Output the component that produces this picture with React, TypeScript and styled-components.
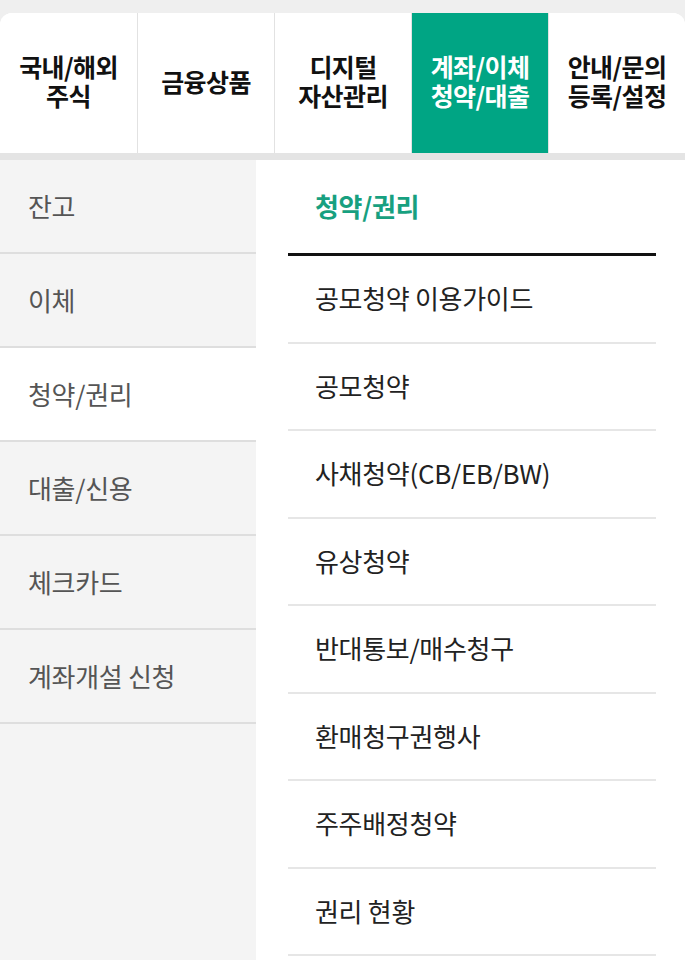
import React from 'react'
import styled, { createGlobalStyle } from 'styled-components'

const GlobalStyle = createGlobalStyle`
  html, body {
    margin: 0;
    padding: 0;
    background: #efefef;
    font-family: "Noto Sans CJK KR", "Noto Sans", sans-serif;
  }
  * { box-sizing: border-box; }
`

const tabs = [
  ['국내/해외', '주식'],
  ['금융상품'],
  ['디지털', '자산관리'],
  ['계좌/이체', '청약/대출'],
  ['안내/문의', '등록/설정'],
]

const sideItems = ['잔고', '이체', '청약/권리', '대출/신용', '체크카드', '계좌개설 신청']

const subItems = [
  '공모청약 이용가이드',
  '공모청약',
  '사채청약(CB/EB/BW)',
  '유상청약',
  '반대통보/매수청구',
  '환매청구권행사',
  '주주배정청약',
  '권리 현황',
]

export default function App() {
  return (
    <Page>
      <GlobalStyle />
      <TabBar>
        {tabs.map((lines, i) => (
          <Tab key={i} active={i === 3}>
            {lines.map((l) => (
              <span key={l}>{l}</span>
            ))}
          </Tab>
        ))}
      </TabBar>
      <Body>
        <Side>
          {sideItems.map((s) => (
            <SideItem key={s} active={s === '청약/권리'}>
              {s}
            </SideItem>
          ))}
        </Side>
        <Content>
          <Title>청약/권리</Title>
          <List>
            {subItems.map((s) => (
              <ListItem key={s}>{s}</ListItem>
            ))}
          </List>
        </Content>
      </Body>
    </Page>
  )
}

const Page = styled.div`
  width: 685px;
  height: 960px;
  overflow: hidden;
  background: #efefef;
  padding-top: 13px;
  display: flex;
  flex-direction: column;
`

const TabBar = styled.div`
  display: grid;
  grid-template-columns: repeat(5, 1fr);
  height: 140px;
  background: #fff;
  border-radius: 12px 12px 0 0;
  overflow: hidden;
  border-bottom: 7px solid #e4e4e4;
  box-sizing: content-box;
`

const Tab = styled.div<{ active?: boolean }>`
  display: flex;
  flex-direction: column;
  align-items: center;
  justify-content: center;
  font-size: 25px;
  font-weight: 700;
  line-height: 29px;
  letter-spacing: -0.6px;
  white-space: nowrap;
  color: ${({ active }) => (active ? '#fff' : '#111')};
  background: ${({ active }) => (active ? '#00a584' : '#fff')};
  border-left: 1px solid #e2e2e2;
  padding-bottom: 4px;
  &:first-child {
    border-left: none;
  }
`

const Body = styled.div`
  flex: 1;
  display: flex;
  background: #fff;
`

const Side = styled.div`
  width: 256px;
  flex-shrink: 0;
  background: #f4f4f4;
`

const SideItem = styled.div<{ active?: boolean }>`
  height: 94px;
  display: flex;
  align-items: center;
  padding-left: 28px;
  padding-bottom: 2px;
  font-size: 26px;
  color: #555;
  letter-spacing: -0.3px;
  background: ${({ active }) => (active ? '#fff' : '#f4f4f4')};
  border-bottom: 2px solid #dedede;
`

const Content = styled.div`
  flex: 1;
  padding: 0 29px 0 32px;
`

const Title = styled.div`
  height: 96px;
  display: flex;
  align-items: center;
  padding-left: 27px;
  padding-bottom: 2px;
  font-size: 26px;
  font-weight: 700;
  letter-spacing: -0.3px;
  color: #17a080;
  border-bottom: 3px solid #111;
`

const List = styled.div`
  display: flex;
  flex-direction: column;
`

const ListItem = styled.div`
  height: 87.5px;
  display: flex;
  align-items: center;
  padding-left: 27px;
  padding-bottom: 2px;
  font-size: 26px;
  color: #222;
  letter-spacing: -0.3px;
  border-bottom: 2px solid #e6e6e6;
`
